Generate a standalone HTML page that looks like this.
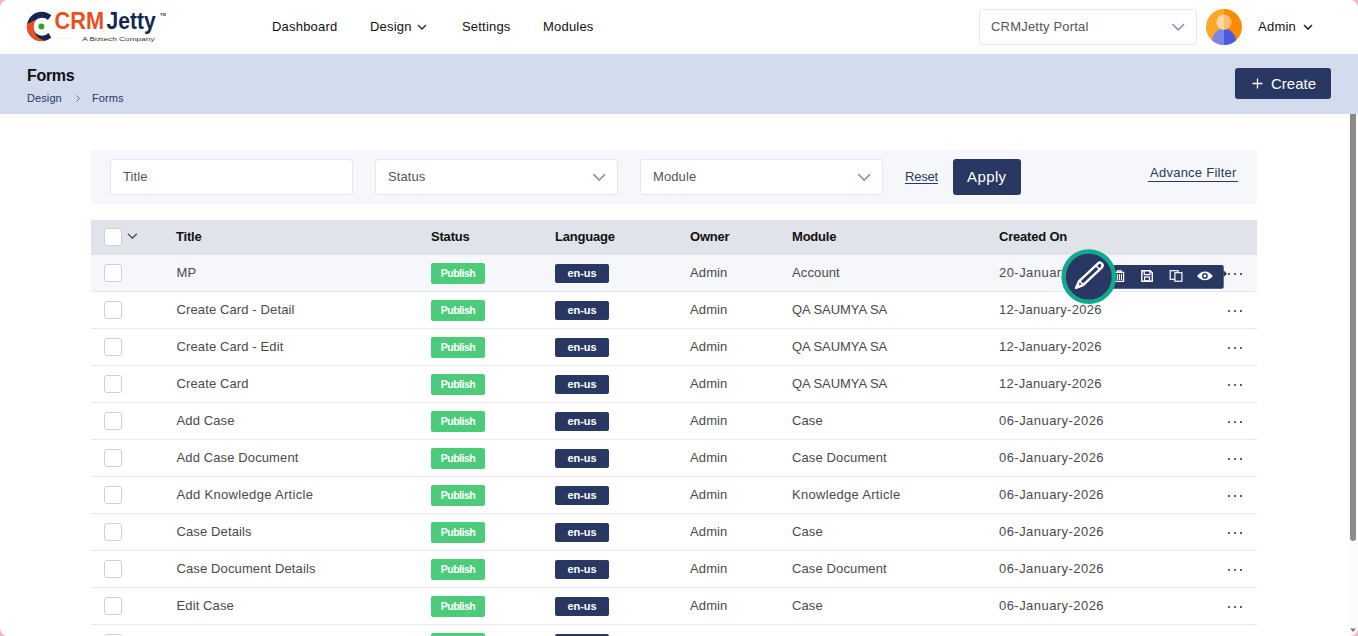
<!DOCTYPE html>
<html lang="en">
<head>
<meta charset="utf-8">
<title>Forms</title>
<style>
*{box-sizing:border-box;margin:0;padding:0}
html,body{width:1358px;height:636px;overflow:hidden;background:#fff}
body{font-family:"Liberation Sans",sans-serif;font-size:13px;color:#4a4a4a;position:relative}
.abs{position:absolute}
.t{position:absolute;white-space:nowrap;line-height:16px}
.nav{font-size:13px;color:#111;top:19px;letter-spacing:.2px}
#band{left:0;top:54px;width:1358px;height:60px;background:#d3dbee}
#filter{left:91px;top:150px;width:1166px;height:54px;background:#f6f7fb}
.inp{position:absolute;top:159px;height:36px;width:243px;background:#fff;border:1px solid #e4e7f1;border-radius:3px}
.inp span{position:absolute;left:12px;top:9px;line-height:16px;color:#555;font-size:13px;letter-spacing:.1px}
.chev{position:absolute}
#thead{left:91px;top:220px;width:1166px;height:35px;background:#e0e3e9}
.th{position:absolute;top:229px;font-weight:bold;color:#111;font-size:13px;line-height:16px;white-space:nowrap;letter-spacing:-.2px}
.row{position:absolute;left:91px;width:1166px;height:37px;border-bottom:1px solid #e6e8f3}
.row span{position:absolute;top:10px;line-height:16px;white-space:nowrap;letter-spacing:.12px}
.row .cb{left:13px;top:9px;width:18px;height:18px;border:1px solid #cfcfd4;border-radius:3px;background:#fff}
.row .c1{left:85.5px}
.row .pub{left:340px;top:8px;width:54px;height:21px;background:#4ccb7b;border-radius:2px;color:#fff;font-size:10.5px;font-weight:bold;text-align:center;line-height:21px;letter-spacing:-.5px}
.row .lang{left:464px;top:9px;width:54px;height:19px;background:#283862;border-radius:2px;color:#fff;font-size:11px;font-weight:bold;text-align:center;line-height:18px;letter-spacing:-.1px}
.row .c4{left:599px}
.row .c5{left:701px}
.row .c6{left:908px;letter-spacing:.45px}
.row .dots{left:1137px;top:18px;width:15px;height:3px}
.row .dots i{position:absolute;top:0;width:2.4px;height:2.4px;border-radius:50%;background:#2a2a2a}
</style>
</head>
<body>
<!-- header -->
<svg class="abs" style="left:0;top:0;z-index:9" width="9" height="9"><path d="M0 0 H8 A8 8 0 0 0 0 8 Z" fill="#f8b3cf"/></svg>
<svg class="abs" style="left:1349px;top:0;z-index:9" width="9" height="9"><path d="M9 0 H1 A8 8 0 0 1 9 8 Z" fill="#f8b3cf"/></svg>
<svg class="abs" style="left:0;top:627px;z-index:9" width="9" height="9"><path d="M0 9 H8 A8 8 0 0 1 0 1 Z" fill="#f8b3cf"/></svg>
<svg class="abs" style="left:1349px;top:627px;z-index:9" width="9" height="9"><path d="M9 9 H1 A8 8 0 0 0 9 1 Z" fill="#f8b3cf"/></svg>

<svg id="logo" class="abs" style="left:20px;top:5px" width="160" height="45" viewBox="20 5 160 45">
 <path d="M51.3 15.3 A14.7 14.7 0 1 0 51.3 37.5 L48.5 32.9 A9 9 0 1 1 48 19.9 Z" fill="#14264f"/>
 <path d="M27 24 A14.7 14.7 0 0 0 45.4 40.7 A13.5 13.5 0 0 1 36.1 19.5 Z" fill="#e8501f"/>
 <circle cx="41.4" cy="26.5" r="2.95" fill="#2fa31f"/>
 <rect x="55" y="38" width="20" height="1" fill="#f5f5f5"/>
 <text x="54.5" y="28.6" font-family="Liberation Sans, sans-serif" font-weight="bold" font-size="23.2" fill="#e8501f" textLength="49.5" lengthAdjust="spacingAndGlyphs">CRM</text>
 <text x="106.6" y="28.6" font-family="Liberation Sans, sans-serif" font-weight="bold" font-size="23.3" fill="#14264f" textLength="49.2" lengthAdjust="spacingAndGlyphs">Jetty</text>
 <text x="160" y="15.9" font-family="Liberation Sans, sans-serif" font-size="4.4" font-weight="bold" fill="#444" textLength="6.2" lengthAdjust="spacingAndGlyphs">TM</text>
 <text x="82.2" y="40.5" font-family="Liberation Sans, sans-serif" font-size="6.1" fill="#333" textLength="72.4" lengthAdjust="spacingAndGlyphs">A Biztech Company</text>
</svg>

<span class="t nav" style="left:272px">Dashboard</span>
<span class="t nav" style="left:370px">Design</span>
<svg class="abs" style="left:416.4px;top:23px" width="12" height="8" viewBox="0 0 12 8"><path d="M2 2 L6 6 L10 2" fill="none" stroke="#2a2a2a" stroke-width="1.4"/></svg>
<span class="t nav" style="left:462px">Settings</span>
<span class="t nav" style="left:543px">Modules</span>

<div class="abs" style="left:979px;top:9px;width:218px;height:36px;border:1px solid #e4e7f1;border-radius:3px;background:#fff"></div>
<span class="t" style="left:991px;top:19px;color:#555;font-size:13px;letter-spacing:.2px">CRMJetty Portal</span>
<svg class="abs" style="left:1170px;top:22px" width="16" height="10" viewBox="0 0 16 10"><path d="M2.8 2.5 L8.2 7.9 L13.6 2.5" fill="none" stroke="#8899b5" stroke-width="1.65" stroke-linecap="round" stroke-linejoin="round"/></svg>

<svg class="abs" style="left:1206px;top:9px" width="36" height="36" viewBox="0 0 36 36">
 <defs><clipPath id="av"><circle cx="18" cy="18" r="18"/></clipPath></defs>
 <g clip-path="url(#av)">
  <rect x="0" y="0" width="18" height="36" fill="#ffa726"/>
  <rect x="18" y="0" width="18" height="36" fill="#fb8c00"/>
  <path d="M18 19.6 A12.3 14 0 0 0 5.7 33.6 V36 H18 Z" fill="#7986e8"/>
  <path d="M18 19.6 A12.3 14 0 0 1 30.3 33.6 V36 H18 Z" fill="#4a5be0"/>
  <path d="M18 5.6 A7.6 7.6 0 0 0 18 20.8 Z" fill="#ffd9a0"/>
  <path d="M18 5.6 A7.6 7.6 0 0 1 18 20.8 Z" fill="#ffbd73"/>
 </g>
</svg>
<span class="t" style="left:1258px;top:19px;color:#111;font-size:13px;letter-spacing:.25px">Admin</span>
<svg class="abs" style="left:1301.5px;top:23px" width="12" height="8" viewBox="0 0 12 8"><path d="M2 2 L6 6 L10 2" fill="none" stroke="#2a2a2a" stroke-width="1.6"/></svg>

<!-- band -->
<div id="band" class="abs"></div>
<span class="t" style="left:27px;top:66px;font-size:16px;font-weight:bold;color:#111;line-height:20px;letter-spacing:-.3px">Forms</span>
<span class="t" style="left:27px;top:91px;font-size:11px;color:#283862;line-height:14px;letter-spacing:.1px">Design</span>
<svg class="abs" style="left:74px;top:94px" width="8" height="9" viewBox="0 0 8 9"><path d="M2.5 1.5 L5.5 4.5 L2.5 7.5" fill="none" stroke="#6b7390" stroke-width="1"/></svg>
<span class="t" style="left:92px;top:91px;font-size:11px;color:#283862;line-height:14px;letter-spacing:.1px">Forms</span>
<div class="abs" style="left:1235px;top:68px;width:96px;height:31px;background:#283862;border-radius:3px"></div>
<svg class="abs" style="left:1251.6px;top:78.4px" width="11" height="11" viewBox="0 0 11 11"><path d="M5.5 0.5 V10.5 M0.5 5.5 H10.5" stroke="#fff" stroke-width="1.3" fill="none"/></svg>
<span class="t" style="left:1271px;top:75px;font-size:15px;color:#fff;line-height:18px">Create</span>

<!-- scrollbar -->
<div class="abs" style="left:1348px;top:114px;width:10px;height:522px;background:#fcfcfc"></div>
<div class="abs" style="left:1350px;top:114px;width:6px;height:427px;background:#8a8a8a;border-radius:0 0 3px 3px"></div>
<svg class="abs" style="left:1349px;top:628px" width="8" height="5" viewBox="0 0 8 5"><path d="M1 0.5 H7 L4 4 Z" fill="#7a7a7a"/></svg>

<!-- filter -->
<div id="filter" class="abs"></div>
<div class="inp" style="left:110px"><span>Title</span></div>
<div class="inp" style="left:375px"><span>Status</span><svg class="chev" style="left:215px;top:12px" width="16" height="10" viewBox="0 0 16 10"><path d="M2.8 2.7 L8.2 8.2 L13.6 2.7" fill="none" stroke="#8899b5" stroke-width="1.65" stroke-linecap="round" stroke-linejoin="round"/></svg></div>
<div class="inp" style="left:640px"><span>Module</span><svg class="chev" style="left:215px;top:12px" width="16" height="10" viewBox="0 0 16 10"><path d="M2.8 2.7 L8.2 8.2 L13.6 2.7" fill="none" stroke="#8899b5" stroke-width="1.65" stroke-linecap="round" stroke-linejoin="round"/></svg></div>
<span class="t" style="left:905px;top:169px;color:#283862;font-size:13px;text-decoration:underline;text-underline-offset:2px;letter-spacing:-.2px">Reset</span>
<div class="abs" style="left:953px;top:159px;width:68px;height:36px;background:#283862;border-radius:3px"></div>
<span class="t" style="left:967px;top:168px;color:#fff;font-size:15px;line-height:18px;letter-spacing:.4px">Apply</span>
<span class="t" style="left:1150px;top:165px;color:#283862;font-size:13px;letter-spacing:.25px">Advance Filter</span>
<div class="abs" style="left:1148px;top:181px;width:90px;height:1px;background:#283862"></div>

<!-- table head -->
<div id="thead" class="abs"></div>
<div class="abs" style="left:104px;top:228px;width:18px;height:18px;border:1px solid #cfcfd4;border-radius:3px;background:#fff"></div>
<svg class="abs" style="left:127px;top:232px" width="12" height="8" viewBox="0 0 12 8"><path d="M1 1.8 L5.4 6.2 L9.8 1.8" fill="none" stroke="#333" stroke-width="1.15"/></svg>
<span class="th" style="left:176px">Title</span>
<span class="th" style="left:431px">Status</span>
<span class="th" style="left:555px">Language</span>
<span class="th" style="left:690px">Owner</span>
<span class="th" style="left:792px">Module</span>
<span class="th" style="left:999px">Created On</span>

<!-- rows -->
<div class="row" style="top:255px;background:#f6f7fb"><i class="abs cb"></i><span class="c1">MP</span><span class="pub">Publish</span><span class="lang">en-us</span><span class="c4">Admin</span><span class="c5">Account</span><span class="c6">20-January-2026</span><span class="dots"><i style="left:0"></i><i style="left:6px"></i><i style="left:12px"></i></span></div>
<div class="row" style="top:292px"><i class="abs cb"></i><span class="c1">Create Card - Detail</span><span class="pub">Publish</span><span class="lang">en-us</span><span class="c4">Admin</span><span class="c5" style="letter-spacing:-.06px">QA SAUMYA SA</span><span class="c6" style="letter-spacing:.3px">12-January-2026</span><span class="dots"><i style="left:0"></i><i style="left:6px"></i><i style="left:12px"></i></span></div>
<div class="row" style="top:329px"><i class="abs cb"></i><span class="c1">Create Card - Edit</span><span class="pub">Publish</span><span class="lang">en-us</span><span class="c4">Admin</span><span class="c5" style="letter-spacing:-.06px">QA SAUMYA SA</span><span class="c6" style="letter-spacing:.3px">12-January-2026</span><span class="dots"><i style="left:0"></i><i style="left:6px"></i><i style="left:12px"></i></span></div>
<div class="row" style="top:366px"><i class="abs cb"></i><span class="c1">Create Card</span><span class="pub">Publish</span><span class="lang">en-us</span><span class="c4">Admin</span><span class="c5" style="letter-spacing:-.06px">QA SAUMYA SA</span><span class="c6" style="letter-spacing:.3px">12-January-2026</span><span class="dots"><i style="left:0"></i><i style="left:6px"></i><i style="left:12px"></i></span></div>
<div class="row" style="top:403px"><i class="abs cb"></i><span class="c1">Add Case</span><span class="pub">Publish</span><span class="lang">en-us</span><span class="c4">Admin</span><span class="c5">Case</span><span class="c6">06-January-2026</span><span class="dots"><i style="left:0"></i><i style="left:6px"></i><i style="left:12px"></i></span></div>
<div class="row" style="top:440px"><i class="abs cb"></i><span class="c1">Add Case Document</span><span class="pub">Publish</span><span class="lang">en-us</span><span class="c4">Admin</span><span class="c5">Case Document</span><span class="c6">06-January-2026</span><span class="dots"><i style="left:0"></i><i style="left:6px"></i><i style="left:12px"></i></span></div>
<div class="row" style="top:477px"><i class="abs cb"></i><span class="c1" style="letter-spacing:.32px">Add Knowledge Article</span><span class="pub">Publish</span><span class="lang">en-us</span><span class="c4">Admin</span><span class="c5" style="letter-spacing:.3px">Knowledge Article</span><span class="c6">06-January-2026</span><span class="dots"><i style="left:0"></i><i style="left:6px"></i><i style="left:12px"></i></span></div>
<div class="row" style="top:514px"><i class="abs cb"></i><span class="c1">Case Details</span><span class="pub">Publish</span><span class="lang">en-us</span><span class="c4">Admin</span><span class="c5">Case</span><span class="c6">06-January-2026</span><span class="dots"><i style="left:0"></i><i style="left:6px"></i><i style="left:12px"></i></span></div>
<div class="row" style="top:551px"><i class="abs cb"></i><span class="c1">Case Document Details</span><span class="pub">Publish</span><span class="lang">en-us</span><span class="c4">Admin</span><span class="c5">Case Document</span><span class="c6">06-January-2026</span><span class="dots"><i style="left:0"></i><i style="left:6px"></i><i style="left:12px"></i></span></div>
<div class="row" style="top:588px"><i class="abs cb"></i><span class="c1">Edit Case</span><span class="pub">Publish</span><span class="lang">en-us</span><span class="c4">Admin</span><span class="c5">Case</span><span class="c6">06-January-2026</span><span class="dots"><i style="left:0"></i><i style="left:6px"></i><i style="left:12px"></i></span></div>
<div class="row" style="top:625px;border:0"><i class="abs cb"></i><span class="pub">Publish</span><span class="lang">en-us</span></div>

<!-- hover action toolbar -->
<svg class="abs" style="left:1055px;top:245px" width="180" height="65" viewBox="1055 245 180 65">
 <rect x="1070" y="265" width="153.7" height="23.8" rx="2" fill="#283862"/>
 <path d="M1223.5 270.3 L1227 273.8 L1223.5 277.3 Z" fill="#283862"/>
 <!-- trash -->
 <g fill="none" stroke="#fff" stroke-width="1.2">
  <path d="M1114.2 272.4 H1124.4 M1117.4 272.2 V270.8 H1121.3 V272.2"/>
  <path d="M1115.2 273 V281.4 H1123.6 V273"/>
  <path d="M1117.3 274 V280 M1119.4 274 V280 M1121.5 274 V280" stroke-width="1.1"/>
 </g>
 <!-- save -->
 <g fill="none" stroke="#fff" stroke-width="1.4">
  <path d="M1141.8 270.8 H1150.2 L1152.3 272.9 V281.3 H1141.8 Z"/>
  <path d="M1144.2 271 V274.6 H1150 V271" stroke-width="1.2"/>
  <rect x="1144.6" y="277" width="4.9" height="3.8" stroke-width="1.2"/>
 </g>
 <!-- copy -->
 <g fill="#283862" stroke="#fff" stroke-width="1.2">
  <rect x="1170.2" y="270.7" width="7.8" height="8.6"/>
  <rect x="1174.9" y="272.7" width="7" height="8.5"/>
 </g>
 <!-- eye -->
 <path d="M1197 275.9 Q1201 271.6 1204.9 271.6 Q1208.9 271.6 1212.9 275.9 Q1208.9 280.2 1204.9 280.2 Q1201 280.2 1197 275.9 Z" fill="#fff"/>
 <circle cx="1204.9" cy="275.9" r="2.9" fill="#283862"/>
 <circle cx="1204.9" cy="275.9" r="1.4" fill="#fff"/>
 <!-- edit circle -->
 <circle cx="1088.8" cy="276.7" r="25.15" fill="#283862" stroke="#10a98b" stroke-width="4.5"/>
 <g transform="translate(1075.3 288.6) rotate(-43.3)" fill="none" stroke="#fff" stroke-width="2.4" stroke-linejoin="round">
  <path d="M1 0 L8 -2.8 H33.6 A2.8 2.8 0 0 1 33.6 2.8 H8 Z"/>
  <path d="M8.4 -2.8 V2.8 M30.8 -2.8 V2.8" stroke-width="1.6"/>
  <path d="M0.6 0 L5 -1.8 V1.8 Z" fill="#fff" stroke-width="1"/>
 </g>
</svg>
</body>
</html>
